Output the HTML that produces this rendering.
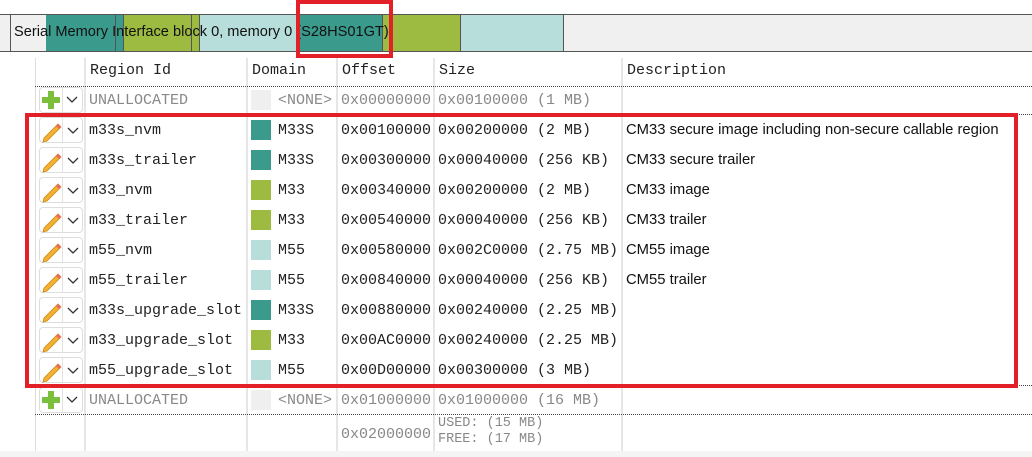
<!DOCTYPE html>
<html><head><style>
*{margin:0;padding:0;box-sizing:border-box}
body{width:1032px;height:457px;background:#fff;position:relative;overflow:hidden;font-family:"Liberation Sans",sans-serif}
.a{position:absolute}
.mono{font-family:"Liberation Mono",monospace;font-size:15px;color:#222;white-space:nowrap;line-height:17px}
.gray{color:#888}
.vl{position:absolute;top:58px;height:399px;width:2px;background:#e6e6e6}
.sw{position:absolute;width:20px;height:20px}
.btn{position:absolute;left:39px;width:44px;height:26px;border:1px solid #ddd;border-radius:4px;background:#fff}
.btn:after{content:"";position:absolute;left:22px;top:0;width:1px;height:24px;background:#e2e2e2}
.desc{position:absolute;left:626px;font-size:14.8px;color:#111;white-space:nowrap}
.dot{position:absolute;left:35px;right:0;height:0;border-top:1px dotted #444}
</style></head><body>
<div class="a" style="left:0;top:14px;width:1032px;height:38px;background:#f0f0f0;border-top:1px solid #555;border-bottom:1px solid #555"></div>
<div class="a" style="left:10px;top:14px;width:1px;height:38px;background:#555"></div>
<div class="a" style="left:46px;top:15px;width:69px;height:36px;background:#3a9a8c"></div>
<div class="a" style="left:115px;top:15px;width:8px;height:36px;background:#3a9a8c;border-left:1px solid #555"></div>
<div class="a" style="left:123px;top:15px;width:68px;height:36px;background:#9cbb40;border-left:1px solid #555"></div>
<div class="a" style="left:191px;top:15px;width:9px;height:36px;background:#9cbb40;border-left:1px solid #555;border-right:1px solid #555"></div>
<div class="a" style="left:200px;top:15px;width:97px;height:36px;background:#b7dedb"></div>
<div class="a" style="left:297px;top:15px;width:85px;height:36px;background:#3a9a8c;border-left:1px solid #555"></div>
<div class="a" style="left:382px;top:15px;width:78px;height:36px;background:#9cbb40;border-left:1px solid #555"></div>
<div class="a" style="left:460px;top:15px;width:104px;height:36px;background:#b7dedb;border-left:1px solid #555;border-right:1px solid #555"></div>
<div class="a" style="left:14px;top:24px;font-size:14.6px;color:#111;white-space:nowrap">Serial Memory Interface block 0, memory 0 (S28HS01GT)</div>
<div class="a" style="left:296px;top:0;width:97px;height:58px;border:4px solid #e32028"></div>

<div class="vl" style="left:35px;width:1px;background:#ddd"></div>
<div class="vl" style="left:84px"></div>
<div class="vl" style="left:246px"></div>
<div class="vl" style="left:336px"></div>
<div class="vl" style="left:433px"></div>
<div class="vl" style="left:621px"></div>

<div class="a mono" style="left:90px;top:62px">Region Id</div>
<div class="a mono" style="left:252px;top:62px">Domain</div>
<div class="a mono" style="left:342px;top:62px">Offset</div>
<div class="a mono" style="left:439px;top:62px">Size</div>
<div class="a mono" style="left:627px;top:62px">Description</div>
<div class="dot" style="top:86px"></div>
<div class="dot" style="top:114px;left:620px"></div>
<div class="dot" style="top:385px"></div>
<div class="dot" style="top:414px"></div>

<div class="btn" style="top:87px"></div>
<svg class="a" style="left:42px;top:91px" width="18" height="18"><path d="M6 0h6v6h6v6h-6v6h-6v-6h-6v-6h6z" fill="#7cbf3c"/></svg>
<svg class="a" style="left:66px;top:96px" width="12" height="8"><path d="M1 1l5 5 5-5" stroke="#333" fill="none" stroke-width="1.3"/></svg>
<div class="a mono gray" style="left:89px;top:92px">UNALLOCATED</div>
<div class="sw" style="left:251px;top:90px;background:#efefef"></div>
<div class="a mono gray" style="left:278px;top:92px">&lt;NONE&gt;</div>
<div class="a mono gray" style="left:341px;top:92px">0x00000000</div>
<div class="a mono gray" style="left:438px;top:92px">0x00100000 (1 MB)</div>

<div class="btn" style="top:117px"></div><div class="btn" style="top:147px"></div><div class="btn" style="top:177px"></div><div class="btn" style="top:207px"></div><div class="btn" style="top:237px"></div><div class="btn" style="top:267px"></div><div class="btn" style="top:297px"></div><div class="btn" style="top:327px"></div><div class="btn" style="top:357px"></div>
<svg class="a" style="left:0;top:0" width="90" height="400">
<defs><g id="p"><path d="M44 138l14-14 3 3-14 14-4 1z" fill="#f2b134" stroke="#c98a10" stroke-width="0.8"/><path d="M56 126l2-2 3 3-2 2z" fill="#e66"/><path d="M68 128l5 5 5-5" stroke="#333" fill="none" stroke-width="1.3"/></g></defs>
<use href="#p"/><use href="#p" y="30"/><use href="#p" y="60"/><use href="#p" y="90"/><use href="#p" y="120"/><use href="#p" y="150"/><use href="#p" y="180"/><use href="#p" y="210"/><use href="#p" y="240"/>
</svg>

<div class="a mono" style="left:89px;top:122px">m33s_nvm</div>
<div class="a mono" style="left:89px;top:152px">m33s_trailer</div>
<div class="a mono" style="left:89px;top:182px">m33_nvm</div>
<div class="a mono" style="left:89px;top:212px">m33_trailer</div>
<div class="a mono" style="left:89px;top:242px">m55_nvm</div>
<div class="a mono" style="left:89px;top:272px">m55_trailer</div>
<div class="a mono" style="left:89px;top:302px">m33s_upgrade_slot</div>
<div class="a mono" style="left:89px;top:332px">m33_upgrade_slot</div>
<div class="a mono" style="left:89px;top:362px">m55_upgrade_slot</div>

<div class="sw" style="left:251px;top:120px;background:#3a9a8c"></div>
<div class="sw" style="left:251px;top:150px;background:#3a9a8c"></div>
<div class="sw" style="left:251px;top:180px;background:#9cbb40"></div>
<div class="sw" style="left:251px;top:210px;background:#9cbb40"></div>
<div class="sw" style="left:251px;top:240px;background:#b7dedb"></div>
<div class="sw" style="left:251px;top:270px;background:#b7dedb"></div>
<div class="sw" style="left:251px;top:300px;background:#3a9a8c"></div>
<div class="sw" style="left:251px;top:330px;background:#9cbb40"></div>
<div class="sw" style="left:251px;top:360px;background:#b7dedb"></div>

<div class="a mono" style="left:278px;top:122px">M33S</div>
<div class="a mono" style="left:278px;top:152px">M33S</div>
<div class="a mono" style="left:278px;top:182px">M33</div>
<div class="a mono" style="left:278px;top:212px">M33</div>
<div class="a mono" style="left:278px;top:242px">M55</div>
<div class="a mono" style="left:278px;top:272px">M55</div>
<div class="a mono" style="left:278px;top:302px">M33S</div>
<div class="a mono" style="left:278px;top:332px">M33</div>
<div class="a mono" style="left:278px;top:362px">M55</div>

<div class="a mono" style="left:341px;top:122px">0x00100000</div>
<div class="a mono" style="left:341px;top:152px">0x00300000</div>
<div class="a mono" style="left:341px;top:182px">0x00340000</div>
<div class="a mono" style="left:341px;top:212px">0x00540000</div>
<div class="a mono" style="left:341px;top:242px">0x00580000</div>
<div class="a mono" style="left:341px;top:272px">0x00840000</div>
<div class="a mono" style="left:341px;top:302px">0x00880000</div>
<div class="a mono" style="left:341px;top:332px">0x00AC0000</div>
<div class="a mono" style="left:341px;top:362px">0x00D00000</div>

<div class="a mono" style="left:438px;top:122px">0x00200000 (2 MB)</div>
<div class="a mono" style="left:438px;top:152px">0x00040000 (256 KB)</div>
<div class="a mono" style="left:438px;top:182px">0x00200000 (2 MB)</div>
<div class="a mono" style="left:438px;top:212px">0x00040000 (256 KB)</div>
<div class="a mono" style="left:438px;top:242px">0x002C0000 (2.75 MB)</div>
<div class="a mono" style="left:438px;top:272px">0x00040000 (256 KB)</div>
<div class="a mono" style="left:438px;top:302px">0x00240000 (2.25 MB)</div>
<div class="a mono" style="left:438px;top:332px">0x00240000 (2.25 MB)</div>
<div class="a mono" style="left:438px;top:362px">0x00300000 (3 MB)</div>

<div class="desc" style="top:122px">CM33 secure image including non-secure callable region</div>
<div class="desc" style="top:152px">CM33 secure trailer</div>
<div class="desc" style="top:182px">CM33 image</div>
<div class="desc" style="top:212px">CM33 trailer</div>
<div class="desc" style="top:242px">CM55 image</div>
<div class="desc" style="top:272px">CM55 trailer</div>

<div class="btn" style="top:387px"></div>
<svg class="a" style="left:42px;top:391px" width="18" height="18"><path d="M6 0h6v6h6v6h-6v6h-6v-6h-6v-6h6z" fill="#7cbf3c"/></svg>
<svg class="a" style="left:66px;top:396px" width="12" height="8"><path d="M1 1l5 5 5-5" stroke="#333" fill="none" stroke-width="1.3"/></svg>
<div class="a mono gray" style="left:89px;top:392px">UNALLOCATED</div>
<div class="sw" style="left:251px;top:390px;background:#efefef"></div>
<div class="a mono gray" style="left:278px;top:392px">&lt;NONE&gt;</div>
<div class="a mono gray" style="left:341px;top:392px">0x01000000</div>
<div class="a mono gray" style="left:438px;top:392px">0x01000000 (16 MB)</div>

<div class="a mono gray" style="left:341px;top:426px">0x02000000</div>
<div class="a mono gray" style="left:438px;top:416px;font-size:13.5px;line-height:15px">USED: (15 MB)</div>
<div class="a mono gray" style="left:438px;top:432px;font-size:13.5px;line-height:15px">FREE: (17 MB)</div>
<div class="a" style="left:0;top:451px;width:1032px;height:6px;background:#f4f4f4"></div>

<div class="a" style="left:25px;top:113px;width:993px;height:275px;border:4px solid #e32028"></div>
</body></html>
